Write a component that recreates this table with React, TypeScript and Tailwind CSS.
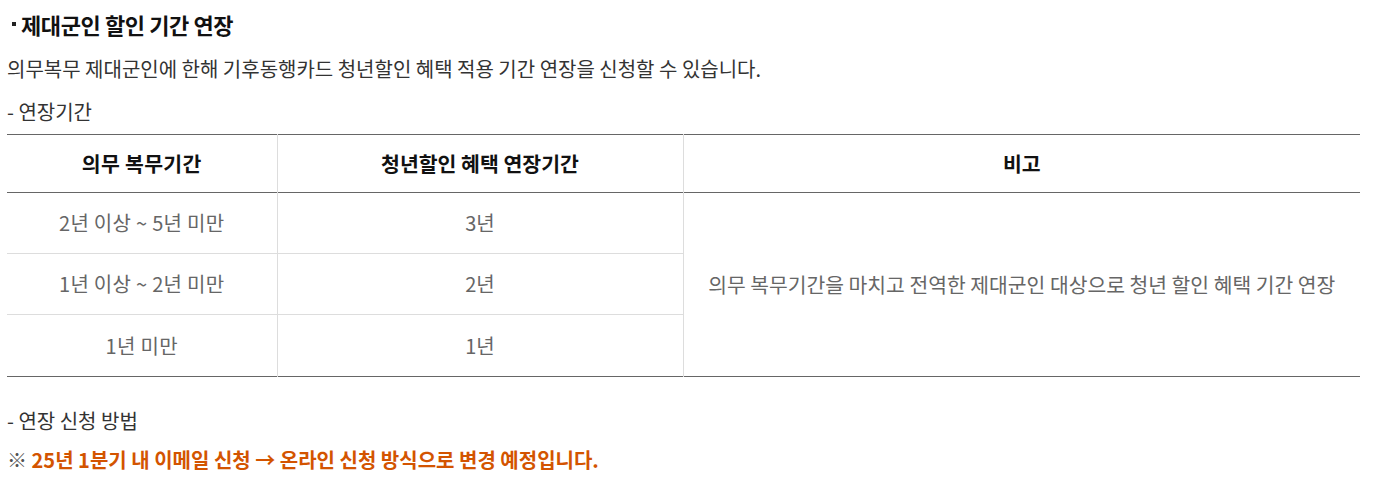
const rows = [
  { period: "2년 이상 ~ 5년 미만", ext: "3년" },
  { period: "1년 이상 ~ 2년 미만", ext: "2년" },
  { period: "1년 미만", ext: "1년" },
];

export default function App() {
  return (
    <div
      className="w-[1378px] bg-white pl-[7px] pr-[18px] pt-[9px] text-[#333]"
      style={{ fontFamily: '"Noto Sans CJK KR", "Noto Sans", sans-serif' }}
    >
      <h3 className="flex items-center text-[22px] font-bold leading-[30px] tracking-[-0.4px] text-[#111]">
        <span className="ml-[5px] mr-[5px] inline-block h-[4px] w-[4px] bg-[#222]" />
        제대군인 할인 기간 연장
      </h3>
      <p className="mt-[16px] text-[20px] leading-[28px] text-[#333]">
        의무복무 제대군인에 한해 기후동행카드 청년할인 혜택 적용 기간 연장을 신청할 수 있습니다.
      </p>
      <p className="mt-[15px] text-[20px] leading-[28px] text-[#333]">- 연장기간</p>

      <table className="mt-[8px] w-[1353px] table-fixed border-collapse border-y border-[#666]">
        <colgroup>
          <col className="w-[270px]" />
          <col className="w-[406px]" />
          <col />
        </colgroup>
        <thead>
          <tr className="h-[58px] border-b border-[#666]">
            <th className="border-r border-[#ddd] text-center text-[20.5px] font-bold tracking-[0.3px] text-[#111]">
              의무 복무기간
            </th>
            <th className="border-r border-[#ddd] text-center text-[20.5px] font-bold text-[#111]">
              청년할인 혜택 연장기간
            </th>
            <th className="text-center text-[20.5px] font-bold text-[#111]">비고</th>
          </tr>
        </thead>
        <tbody>
          {rows.map((r, i) => (
            <tr key={i} className={i < rows.length - 1 ? "h-[61px] border-b border-[#ddd]" : "h-[62px]"}>
              <td className="border-r border-[#ddd] text-center text-[20px] tracking-[0.3px] text-[#666]">
                {r.period}
              </td>
              <td className="border-r border-[#ddd] text-center text-[20px] text-[#666]">
                {r.ext}
              </td>
              {i === 0 && (
                <td rowSpan={3} className="text-center text-[20.4px] text-[#666]">
                  의무 복무기간을 마치고 전역한 제대군인 대상으로 청년 할인 혜택 기간 연장
                </td>
              )}
            </tr>
          ))}
        </tbody>
      </table>

      <p className="mt-[30px] text-[20px] leading-[28px] text-[#333]">- 연장 신청 방법</p>
      <p className="mt-[11px] text-[20px] font-bold leading-[28px] text-[#d35400]">
        <span className="font-normal text-[#555]">※</span> 25년 1분기 내 이메일 신청 → 온라인 신청 방식으로 변경 예정입니다.
      </p>
    </div>
  );
}
